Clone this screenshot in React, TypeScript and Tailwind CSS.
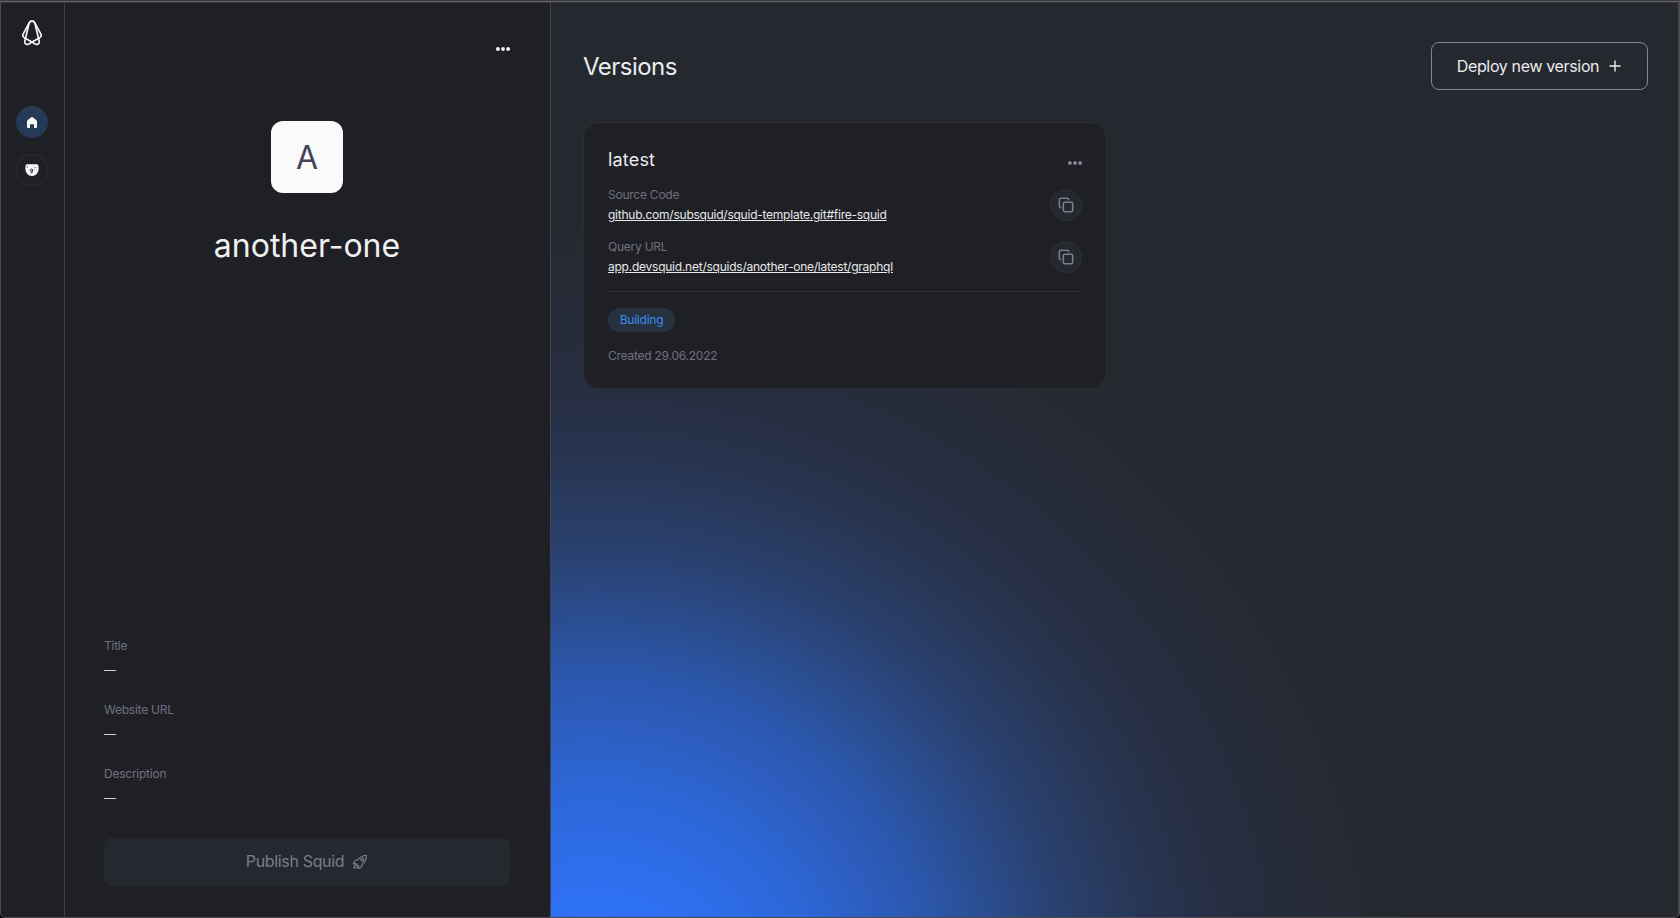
import React from "react";
import { Copy } from "lucide-react";
import { IoRocketOutline } from "react-icons/io5";

function Dots({ className }: { className: string }) {
  return (
    <svg width="14" height="4" viewBox="0 0 14 4" fill="currentColor" className={className}>
      <circle cx="1.9" cy="2" r="1.9" />
      <circle cx="7" cy="2" r="1.9" />
      <circle cx="12.1" cy="2" r="1.9" />
    </svg>
  );
}

function Logo() {
  return (
    <svg width="20" height="26" viewBox="0 0 20 26" fill="none" stroke="#f4f4f6" strokeWidth="1.7" strokeLinejoin="round">
      <path d="M7.2 2.8C8.2.6 11.8.6 12.8 2.8L18.9 14.2C19.5 15.6 19.2 16.6 18 17.4L6.8 24C4.8 25.1 2.2 23.8 2.8 21.2Z" />
      <path d="M12.8 2.8C11.8.6 8.2.6 7.2 2.8L1.1 14.2C.5 15.6.8 16.6 2 17.4L13.2 24C15.2 25.1 17.8 23.8 17.2 21.2Z" />
    </svg>
  );
}

function Field({ label }: { label: string }) {
  return (
    <div className="flex h-16 flex-col">
      <span className="text-xs leading-4 tracking-[-0.02em] text-[#6f707f]">{label}</span>
      <span className="mt-2 text-xs leading-4 text-[#d0d0d4]">—</span>
    </div>
  );
}

function LinkRow({ label, url }: { label: string; url: string }) {
  return (
    <div className="flex h-[52px] items-start justify-between">
      <div className="flex flex-col">
        <span className="text-xs leading-4 tracking-[-0.02em] text-[#6f707f]">{label}</span>
        <a className="mt-1 text-xs leading-4 tracking-[-0.02em] text-[#e8e8ea] underline">{url}</a>
      </div>
      <button className="mt-[2px] flex h-8 w-8 items-center justify-center rounded-full border border-[#2f3037] bg-[#25282f] text-[#7d7e8e]">
        <Copy size={16} strokeWidth={2.3} />
      </button>
    </div>
  );
}

export default function App() {
  return (
    <div className="h-[918px] w-[1680px] bg-black">
      <div className="flex h-[918px] w-[1680px] flex-col overflow-hidden rounded-b-[5px] border-r-2 border-b border-l border-[#4b4b4f] bg-[#1f2025] font-['Inter',sans-serif]">
        <div className="h-px shrink-0 bg-[#3a3a3d]" />
        <div className="h-px shrink-0 bg-[#626266]" />
        <div className="h-px shrink-0 bg-[#37383c]" />
        <div className="flex min-h-0 flex-1">
          <nav className="flex w-16 shrink-0 flex-col items-center border-r border-[#3e3e4c] pt-[17px] pr-px">
            <Logo />
            <div className="mt-[60px] flex h-8 w-8 items-center justify-center rounded-full bg-[#243a56]">
              <svg width="10" height="11" viewBox="0 0 10 11" fill="#f6f6f8">
                <path d="M4.2.3Q5-.2 5.8.3L9.2 3Q10 3.6 10 4.5V10Q10 11 9 11H7V8Q7 7.3 6.3 7.3H3.7Q3 7.3 3 8V11H1Q0 11 0 10V4.5Q0 3.6.8 3Z" />
              </svg>
            </div>
            <div className="mt-4 flex h-8 w-8 items-center justify-center rounded-full border border-[#303035]">
              <svg width="14" height="12" viewBox="0 0 14 12">
                <path d="M1.6.3H12.4Q13.9 1.4 13.7 4.4C13.4 8.9 10.8 11.9 7 11.9S.6 8.9.3 4.4Q.1 1.4 1.6.3Z" fill="#f6f6f8" />
                <path d="M2.5 2.4L2 3.8M8.6 3h.8M10.8 3.1l.4 1M9.3 5.5l.7-.4" stroke="#202125" strokeWidth=".7" fill="none" />
                <ellipse cx="6.3" cy="6.3" rx="1.1" ry="1.2" stroke="#202125" strokeWidth=".8" fill="none" />
                <path d="M7.4 5V8q-.2 1.3-2 .9" stroke="#202125" strokeWidth=".8" fill="none" />
              </svg>
            </div>
          </nav>

          <aside className="flex w-[486px] shrink-0 flex-col border-r border-[#41434d] pt-11 pr-10 pl-[39px]">
            <div className="flex justify-end">
              <Dots className="text-[#f4f4f6]" />
            </div>
            <div className="mt-[70px] flex flex-col items-center">
              <div className="flex h-[72px] w-[72px] items-center justify-center rounded-xl bg-[#fafafa] pt-[2px] text-[32px] text-[#434358]">A</div>
              <h1 className="mt-[33px] text-[32px] leading-10 font-normal text-[#f0f0f2]">another-one</h1>
            </div>
            <div className="mt-auto">
              <Field label="Title" />
              <Field label="Website URL" />
              <Field label="Description" />
            </div>
            <button className="mt-2 mb-[31px] flex h-12 shrink-0 items-center justify-center gap-2 rounded-lg bg-[#25282f] pb-[2px] text-base tracking-[-0.021em] text-[#7b7c8b]">
              Publish Squid
              <IoRocketOutline size={16} className="mt-[2px] [&_path]:[stroke-width:40px]" />
            </button>
          </aside>

          <main className="min-w-0 flex-1 bg-[#25282f] bg-[radial-gradient(1025px_1000px_at_43px_1012px,#2f74fb_0%,#2f72f7_10%,#2e6de8_16%,#2d67d8_22.3%,#2d60c6_27.1%,#2b58b0_33.3%,#2b5098_38.1%,#2a4780_42.9%,#293e68_48.4%,#283859_53.2%,#27334d_57.3%,#272e42_62.5%,#262b38_70%,#25292f_80%,#25282f_90%)] px-8">
            <header className="mt-[39px] flex h-12 items-center justify-between">
              <h2 className="pt-px text-2xl font-normal tracking-[-0.022em] text-[#ececee]">Versions</h2>
              <button className="-mr-[2px] flex h-12 w-[217px] items-center justify-center gap-[10px] rounded-lg border border-[#85868f] pr-px text-base tracking-[-0.022em] text-[#ececee]">
                Deploy new version
                <svg width="12" height="12" viewBox="0 0 12 12" stroke="currentColor" strokeWidth="1.4">
                  <path d="M6 .5V11.5M.5 6H11.5" />
                </svg>
              </button>
            </header>
            <section className="mt-8 h-[267px] w-[524px] rounded-2xl border border-[#2d2e34] bg-[#1f2025] px-6 pt-[23px]">
              <div className="flex items-center justify-between">
                <h3 className="pt-[4px] text-lg leading-5 font-normal tracking-[0.01em] text-[#ececee]">latest</h3>
                <Dots className="mt-[9px] text-[#85869a]" />
              </div>
              <div className="mt-[17px]">
                <LinkRow label="Source Code" url="github.com/subsquid/squid-template.git#fire-squid" />
                <LinkRow label="Query URL" url="app.devsquid.net/squids/another-one/latest/graphql" />
              </div>
              <div className="border-t border-[#2e2f35]" />
              <div className="mt-4 flex h-6 w-[67px] items-center justify-center rounded-full bg-[#27313f] text-xs tracking-[-0.02em] text-[#3d8ef0]">Building</div>
              <p className="mt-4 text-xs leading-4 tracking-[-0.02em] text-[#6f707f]">Created 29.06.2022</p>
            </section>
          </main>
        </div>
      </div>
    </div>
  );
}
